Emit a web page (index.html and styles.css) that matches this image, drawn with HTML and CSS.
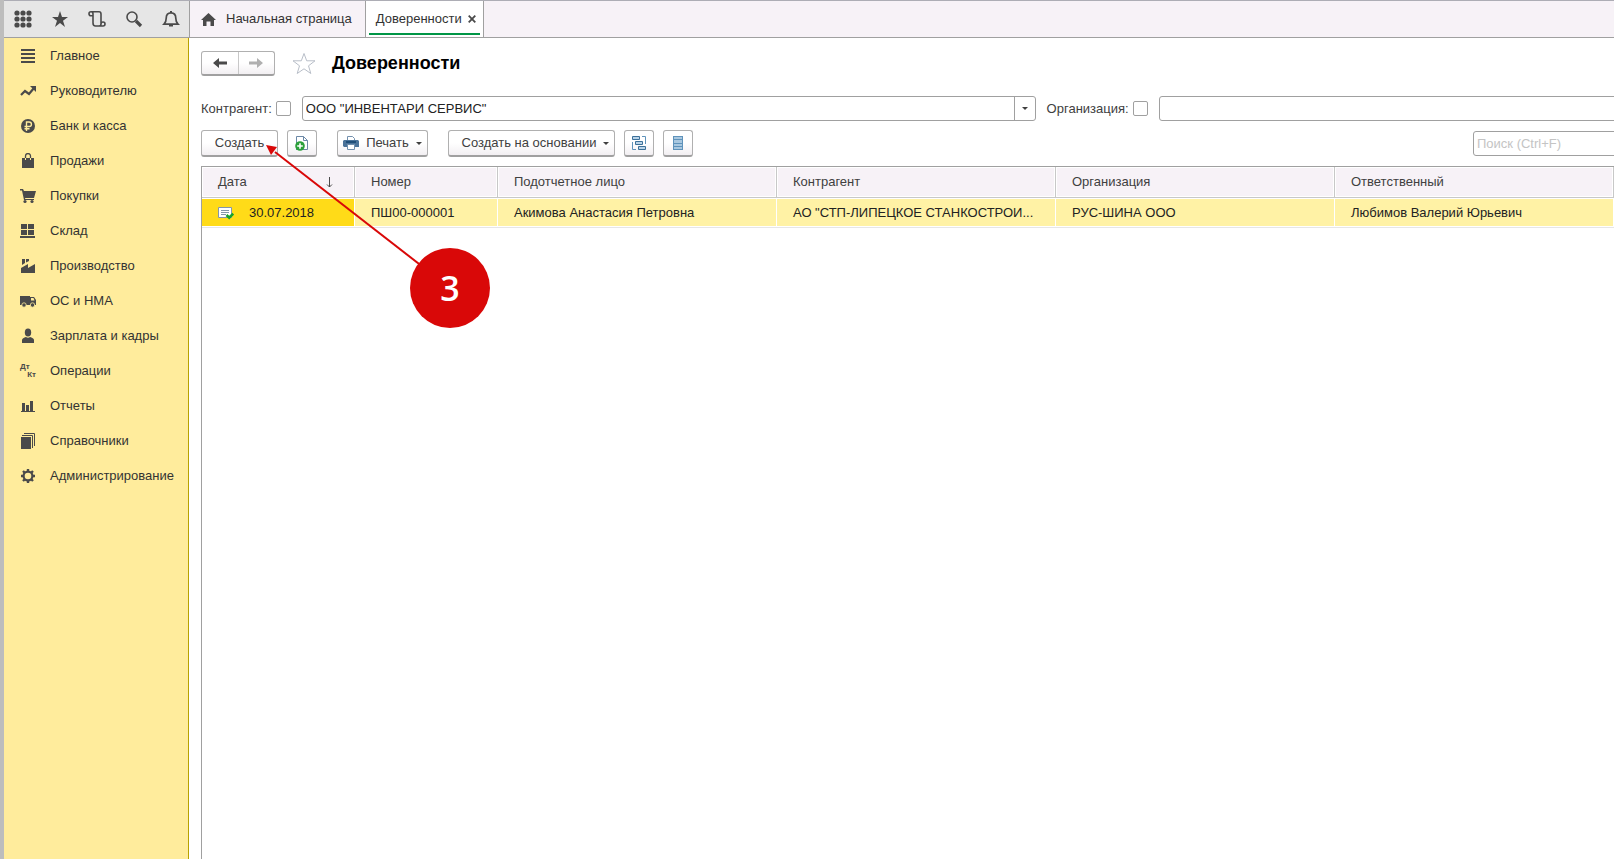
FILE: index.html
```html
<!DOCTYPE html>
<html lang="ru">
<head>
<meta charset="utf-8">
<title>Доверенности</title>
<link rel="stylesheet" href="styles.css">
</head>
<body>
<div class="app">
  <header class="topbar">
    <div class="tools">
      <button class="tool" aria-label="Меню функций"><svg width="18" height="18" viewBox="0 0 18 18"><g fill="#4a4a4a"><circle cx="3" cy="3" r="2.600"/><circle cx="9" cy="3" r="2.600"/><circle cx="15" cy="3" r="2.600"/><circle cx="3" cy="9" r="2.600"/><circle cx="9" cy="9" r="2.600"/><circle cx="15" cy="9" r="2.600"/><circle cx="3" cy="15" r="2.600"/><circle cx="9" cy="15" r="2.600"/><circle cx="15" cy="15" r="2.600"/></g></svg></button>
      <button class="tool" aria-label="Избранное"><svg width="18" height="18" viewBox="0 0 18 18"><path fill="#4a4a4a" d="M9 1l2 6h6l-5 3.700 2 6.300-5-4-5 4 2-6.300L1 7h6z"/></svg></button>
      <button class="tool" aria-label="История"><svg width="18" height="18" viewBox="0 0 18 18"><path fill="none" stroke="#4a4a4a" stroke-width="1.600" d="M5 5.800H3a2 2 0 1 1 2-2V13c0 2 .8 3 2.500 3H15a2 2 0 1 0-2-2V4c0-1.500-.7-2.200-2-2.200H3M13 13v1c0 1-1 2-2 2"/></svg></button>
      <button class="tool" aria-label="Поиск"><svg width="18" height="18" viewBox="0 0 18 18"><circle cx="7" cy="7" r="5" fill="none" stroke="#4a4a4a" stroke-width="1.600"/><path stroke="#4a4a4a" stroke-width="3.200" d="M11 11l5 5"/></svg></button>
      <button class="tool" aria-label="Оповещения"><svg width="18" height="18" viewBox="0 0 18 18"><path fill="none" stroke="#4a4a4a" stroke-width="1.700" d="M2 14.200c1.800-1.700 2.200-2.500 2.200-6C4.200 4.500 6 2.800 9 2.800s4.800 1.700 4.800 5.400c0 3.500.4 4.300 2.200 6z"/><path fill="#4a4a4a" d="M8 1h2v2H8zM7 15h4v1.500H7z"/></svg></button>
    </div>
    <nav class="tabs">
      <a class="tab" href="#home"><svg width="15" height="13" viewBox="0 0 15 13"><path fill="#4a4a4a" d="M7.500 0L15 7h-2v6H9.500V8.500h-4V13H2V7H0z"/></svg><span>Начальная страница</span></a>
      <div class="tab tab-active"><a href="#list">Доверенности</a><button class="close" aria-label="Закрыть"><svg width="8" height="8" viewBox="0 0 8 8"><path stroke="#4a4a4a" stroke-width="1.800" d="M.7.7l6.600 6.600M7.300.7L.7 7.300"/></svg></button></div>
    </nav>
  </header>
  <div class="body">
    <nav class="sidebar">
      <a href="#s1"><svg width="16" height="16" viewBox="0 0 16 16"><path d="M1 1h14v2H1zM1 5h14v2H1zM1 9h14v2H1zM1 13h14v2H1z"/></svg>Главное</a>
      <a href="#s2"><svg width="16" height="16" viewBox="0 0 16 16"><path fill="none" stroke="#4a4a4a" stroke-width="2.200" d="M1 12l4-4 4 3 5-6"/><path d="M10 3h6v6z"/></svg>Руководителю</a>
      <a href="#s3"><svg width="16" height="16" viewBox="0 0 16 16"><circle cx="8" cy="8" r="7"/><path fill="none" stroke="#ffec9c" stroke-width="1.400" d="M6.500 13V4h2.700a2.200 2.200 0 0 1 0 4.500H4.500M4.500 10.700h5"/></svg>Банк и касса</a>
      <a href="#s4"><svg width="16" height="16" viewBox="0 0 16 16"><path d="M2 5h12v10H2z"/><path fill="none" stroke="#4a4a4a" stroke-width="1.300" d="M5.500 6V3a2.500 2.500 0 0 1 5 0v3"/><path fill="none" stroke="#ffec9c" stroke-width="1" d="M5.500 5v2M10.500 5v2"/></svg>Продажи</a>
      <a href="#s5"><svg width="16" height="16" viewBox="0 0 16 16"><path d="M0 1h3l1 2h12l-2 7H5l.3 1H14v1H4L2 2.500H0z"/><circle cx="5" cy="13.500" r="1.600"/><circle cx="12" cy="13.500" r="1.600"/></svg>Покупки</a>
      <a href="#s6"><svg width="16" height="16" viewBox="0 0 16 16"><path d="M1 1h6v5H1zM8 1h6v5H8zM1 7h6v5H1zM8 7h6v5H8zM0 13h15v2H0z"/></svg>Склад</a>
      <a href="#s7"><svg width="16" height="16" viewBox="0 0 16 16"><path d="M1 15V10l7-4v4l7-4v9zM2 1h3v4L2 7zM6 1h3v2L6 4.500z"/></svg>Производство</a>
      <a href="#s8"><svg width="16" height="16" viewBox="0 0 16 16"><path d="M0 3h10v9H0zM10 4h4l2 3v5h-6z"/><path fill="#ffec9c" d="M11 5h2.500l1 2.500H11z"/><circle cx="4" cy="12" r="2.200" stroke="#ffec9c" stroke-width=".8"/><circle cx="12.500" cy="12" r="2.200" stroke="#ffec9c" stroke-width=".8"/></svg>ОС и НМА</a>
      <a href="#s9"><svg width="16" height="16" viewBox="0 0 16 16"><ellipse cx="8" cy="4.500" rx="3.200" ry="4"/><path d="M2 15v-3c0-1.500 2-2.500 4-3 1 1 3 1 4 0 2 .5 4 1.500 4 3v3z"/></svg>Зарплата и кадры</a>
      <a href="#s10"><span class="dtkt" aria-hidden="true"><b>Дт</b><b>Кт</b></span>Операции</a>
      <a href="#s11"><svg width="16" height="16" viewBox="0 0 16 16"><path d="M1 13h14v1H1zM2 5h3v9H2zM6 7h3v7H6zM10 3h3v11h-3z"/></svg>Отчеты</a>
      <a href="#s12"><svg width="16" height="16" viewBox="0 0 16 16"><path d="M1 4h10v12H1z"/><path fill="none" stroke="#4a4a4a" d="M2 2.500h10.500V15M4 .5h10.500V13"/></svg>Справочники</a>
      <a href="#s13"><svg width="16" height="16" viewBox="0 0 16 16"><circle cx="8" cy="8" r="4.400" fill="none" stroke="#4a4a4a" stroke-width="2.200"/><path stroke="#4a4a4a" stroke-width="2.400" d="M8 1v2.500M8 12.500V15M1 8h2.500M12.500 8H15M3 3l2 2M11 11l2 2M13 3l-2 2M5 11l-2 2"/></svg>Администрирование</a>
    </nav>
    <main class="main">
      <div class="titlebar">
        <div class="history">
          <button aria-label="Назад"><svg width="14" height="12" viewBox="0 0 14 12"><path fill="#4a4a4a" d="M0 6l6-5v3.500h8v3H6V11z"/></svg></button>
          <button aria-label="Вперед"><svg width="14" height="12" viewBox="0 0 14 12"><path fill="#b0b0b0" d="M14 6L8 1v3.500H0v3h8V11z"/></svg></button>
        </div>
        <button class="fav" aria-label="В избранное"><svg width="24" height="23" viewBox="0 0 24 23"><path fill="#fff" stroke="#b8bec8" d="M12 1.500l2.700 7.300H23l-6.500 5 2.300 7.700-6.800-4.700-6.800 4.700 2.300-7.700L1 8.800h8.300z"/></svg></button>
        <h1>Доверенности</h1>
      </div>
      <div class="filters">
        <label for="c1">Контрагент:</label>
        <input type="checkbox" id="c1">
        <div class="combo combo-wide"><input type="text" aria-label="Контрагент" value="ООО &quot;ИНВЕНТАРИ СЕРВИС&quot;"><button aria-label="Выбрать"><span class="caret"></span></button></div>
        <label for="c2" class="label-org">Организация:</label>
        <input type="checkbox" id="c2">
        <div class="combo combo-org"><input type="text" aria-label="Организация"></div>
      </div>
      <div class="commands">
        <button class="btn btn-create">Создать</button>
        <button class="btn btn-icon" aria-label="Скопировать"><svg width="16" height="16" viewBox="0 0 16 16"><path fill="#fff" stroke="#6b88a6" d="M2.500 15V1.500h7l4 4v9H8"/><path fill="none" stroke="#6b88a6" d="M9.500 1.500v4h4"/><circle cx="6" cy="11" r="4.800" fill="#2ba03a"/><path stroke="#fff" stroke-width="1.600" d="M3.200 11h5.600M6 8.200v5.600"/></svg></button>
        <button class="btn btn-print"><svg width="16" height="16" viewBox="0 0 16 16"><path fill="#fff" stroke="#7390ae" d="M4.500 5V1.500h5l2 2V5"/><path fill="#4a7299" d="M1 5h14l1 1v6H1l-1-1V6z"/><path fill="#204e78" d="M3 6h10v2H3z"/><path fill="#fff" stroke="#7390ae" d="M4.500 9.500h7v5h-7z"/></svg>Печать<span class="caret"></span></button>
        <button class="btn btn-based">Создать на основании<span class="caret"></span></button>
        <button class="btn btn-icon" aria-label="Структура подчиненности"><svg width="16" height="16" viewBox="0 0 16 16"><g fill="#b9d3e8" stroke="#3d7199"><path d="M1.500 1.500h7v3h-7zM4.500 6.500h7v3h-7zM7.500 11.500h7v3h-7z"/></g><path fill="none" stroke="#5f93bb" d="M11 1.500h3.500V9M1.500 7v7.500H5"/></svg></button>
        <button class="btn btn-icon" aria-label="Реестр"><svg width="16" height="16" viewBox="0 0 16 16"><path fill="#a9c8e0" d="M3 1h10v14H3z"/><path fill="none" stroke="#5f93bb" d="M3 1.500h10M3 4.500h10M3 8.500h10M3 11.500h10M3 14.500h10M3.500 1v14M12.500 1v14"/></svg></button>
        <input class="search" type="text" aria-label="Поиск" placeholder="Поиск (Ctrl+F)">
      </div>
      <div class="list">
        <table>
          <colgroup><col class="col-date"><col class="col-num"><col><col><col><col></colgroup>
          <thead><tr><th><div class="date-head">Дата<svg width="7" height="11" viewBox="0 0 7 11"><path fill="none" stroke="#4a4a4a" d="M3.500 0v10M1 7.500l2.500 2.500L6 7.500"/></svg></div></th><th>Номер</th><th>Подотчетное лицо</th><th>Контрагент</th><th>Организация</th><th>Ответственный</th></tr></thead>
          <tbody><tr><td class="current"><div class="date-cell"><svg width="16" height="14" viewBox="0 0 16 14"><path fill="#fff" stroke="#8296aa" d="M.5 1.500h13v10H.5z"/><path stroke="#8296aa" d="M3 4.500h8M3 6.500h8M3 8.500h5"/><path fill="none" stroke="#17a32b" stroke-width="2.600" d="M8.500 9l2.700 2.700 4-4"/></svg>30.07.2018</div></td><td>ПШ00-000001</td><td>Акимова Анастасия Петровна</td><td>АО "СТП-ЛИПЕЦКОЕ СТАНКОСТРОИ...</td><td>РУС-ШИНА ООО</td><td>Любимов Валерий Юрьевич</td></tr></tbody>
        </table>
      </div>
      <svg class="callout" width="226" height="188" viewBox="0 0 226 188"><path stroke="#d90808" stroke-width="2" d="M184 144L9 8"/><path fill="#d90808" d="M0 1l11 2-6 8z"/><circle cx="184" cy="144" r="40" fill="#d90808"/><text x="184" y="157" text-anchor="middle">3</text></svg>
    </main>
  </div>
</div>
</body>
</html>
```
FILE: styles.css
```css
* { box-sizing: border-box; }
body { margin: 0; font: 13px/16px "Liberation Sans", Arial, sans-serif; color: #404040; background: #fff; }
button, input { font: inherit; color: inherit; }
button { padding: 0; border: 0; background: none; }
a { color: inherit; text-decoration: none; }
svg { display: block; flex: none; }
.app { display: flex; flex-direction: column; min-height: 100vh; border-left: 4px solid #bdbdbd; overflow: hidden; }
.topbar { display: flex; height: 38px; border-top: 1px solid #adadb5; border-bottom: 1px solid #a0a0a0; background: #f7f2f7; }
.tools { display: flex; width: 186px; border-right: 1px solid #a0a0a0; background: #e6e6e6; }
.tool { display: flex; align-items: center; justify-content: center; width: 37px; }
.tabs { display: flex; color: #333; }
.tab { display: flex; align-items: center; gap: 10px; padding: 0 13px 0 11px; border-right: 1px solid #a0a0a0; }
.tab-active { gap: 6px; padding: 0 7px 0 10px; background: linear-gradient(#009646, #009646) 3px 32px / calc(100% - 6px) 2px no-repeat #fff; }
.body { display: flex; flex: 1; }
.sidebar { display: flex; flex-direction: column; width: 185px; border-right: 1px solid #b8a200; background: #ffec9c; color: #333; }
.sidebar a { display: flex; align-items: center; gap: 14px; height: 35px; padding-left: 16px; }
.sidebar svg { fill: #4a4a4a; }
.dtkt { display: flex; flex-direction: column; width: 16px; font-size: 8px; line-height: 8px; color: #4a4a4a; }
.dtkt b:last-child { align-self: flex-end; }
.main { position: relative; flex: 1; display: flex; flex-direction: column; min-width: 0; padding: 12px 0 0 12px; }
.titlebar { display: flex; align-items: center; height: 26px; }
.history { display: flex; width: 74px; height: 25px; border: 1px solid #b0b0b0; border-bottom: 2px solid #a0a0a0; border-radius: 3px; background: linear-gradient(#fff 50%, #f2eff2); }
.history button { display: flex; flex: 1; align-items: center; justify-content: center; }
.history button + button { border-left: 1px solid #c8c8c8; }
.fav { margin-left: 17px; }
h1 { margin: 0 0 0 16px; font-size: 18px; line-height: 24px; color: #000; }
.filters { display: flex; align-items: center; margin-top: 20px; }
.filters input[type="checkbox"] { appearance: none; flex: none; width: 15px; height: 15px; margin: 0 11px 0 4px; border: 1px solid #a0a0a0; border-radius: 2px; background: #fff; }
.combo { display: flex; min-width: 0; height: 25px; border: 1px solid #a0a0a0; border-radius: 3px; background: #fff; }
.combo-wide { flex: 8 1 0; }
.combo-org { flex: 5 1 0; margin-right: -4px; }
.combo input { flex: 1; min-width: 0; padding: 0 3px; border: 0; outline: 0; background: none; color: #222; }
.combo button { display: flex; align-items: center; justify-content: center; width: 21px; border-left: 1px solid #a0a0a0; }
.label-org { margin-left: 11px; }
.caret { border: 3px solid transparent; border-top-color: #404040; border-bottom: 0; }
.commands { display: flex; align-items: center; margin-top: 9px; }
.btn { display: flex; align-items: center; justify-content: center; height: 27px; border: 1px solid #b0b0b0; border-bottom: 2px solid #a0a0a0; border-radius: 3px; background: linear-gradient(#fff 50%, #f2eff2); white-space: nowrap; }
.btn-create { width: 77px; }
.btn-icon { width: 30px; margin-left: 9px; }
.btn-print { width: 91px; margin-left: 20px; gap: 7px; }
.btn-based { width: 167px; margin-left: 20px; padding-left: 8px; gap: 7px; }
.search { width: 145px; height: 25px; margin: 0 -4px 0 auto; padding: 0 3px; border: 1px solid #a0a0a0; border-radius: 3px; }
.search::placeholder { color: #c4c4c4; }
.list { flex: 1; margin-top: 9px; border: 1px solid #a0a0a0; border-width: 1px 0 0 1px; }
table { width: 100%; table-layout: fixed; border-collapse: separate; border-spacing: 0; }
.col-date { width: 153px; }
.col-num { width: 143px; }
th, td { padding: 0 16px; overflow: hidden; text-align: left; font-weight: normal; text-overflow: ellipsis; white-space: nowrap; }
th { height: 31px; border-right: 1px solid #c8c8c8; border-bottom: 1px solid #c8c8c8; background: #f7f2f7; box-shadow: inset 0 0 0 1px #fff; }
td { height: 29px; border: solid #fff; border-width: 1px 1px 1px 0; background: #fff2a5; color: #222; box-shadow: 0 1px #e6e6e6; }
.current { background: #ffdb18; }
.date-head { display: flex; align-items: center; justify-content: space-between; padding-right: 5px; }
.date-cell { display: flex; align-items: center; gap: 15px; }
.callout { position: absolute; left: 77px; top: 106px; pointer-events: none; }
.callout text { font: 600 34px "Open Sans", sans-serif; fill: #fff; }
```
